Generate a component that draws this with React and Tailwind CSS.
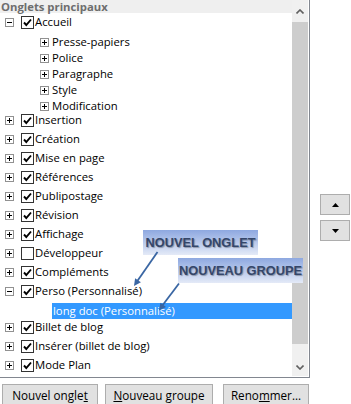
import React from 'react';

// Tree expander box (plus / minus)
function Expander({ open }) {
  return (
    <span className="flex h-[9px] w-[9px] shrink-0 items-center justify-center border border-[#919191] bg-white">
      <svg width="7" height="7" viewBox="0 0 7 7">
        <path d="M1 3.5H6" stroke="#000" strokeWidth="1" />
        {!open && <path d="M3.5 1V6" stroke="#000" strokeWidth="1" />}
      </svg>
    </span>
  );
}

function Check({ checked }) {
  return (
    <span className="flex h-[13px] w-[13px] shrink-0 items-center justify-center border border-[#333333] bg-white">
      {checked && (
        <svg width="11" height="11" viewBox="0 0 11 11">
          <path d="M2 5.5L4.3 8L9 2.5" fill="none" stroke="#000" strokeWidth="1.9" />
        </svg>
      )}
    </span>
  );
}

function TabRow({ label, checked = true, open = false }) {
  return (
    <div className="flex h-[19px] shrink-0 items-center">
      <span className="ml-[5px]"><Expander open={open} /></span>
      <span className="ml-[7px]"><Check checked={checked} /></span>
      <span className="ml-[1px] whitespace-nowrap">{label}</span>
    </div>
  );
}

function GroupRow({ label }) {
  return (
    <div className="flex h-4 shrink-0 items-center">
      <span className="ml-[40px]"><Expander /></span>
      <span className="ml-[3px] whitespace-nowrap">{label}</span>
    </div>
  );
}

function Chevron({ down }) {
  return (
    <svg width="8" height="5" viewBox="0 0 8 5">
      <path
        d={down ? 'M0.5 0.5L4 4L7.5 0.5' : 'M0.5 4.5L4 1L7.5 4.5'}
        fill="none"
        stroke="#606060"
        strokeWidth="1.6"
      />
    </svg>
  );
}

function Button({ className, children }) {
  return (
    <div className={`flex h-[23px] shrink-0 items-center justify-center border border-[#adadad] bg-[#e1e1e1] text-[11.7px] ${className}`}>
      {children}
    </div>
  );
}

export default function App() {
  return (
    <div className="relative h-[404px] w-[351px] overflow-hidden bg-white font-['Open_Sans',sans-serif] text-[11.3px] text-black">
      <div className="flex">
        {/* List box */}
        <div className="flex h-[378px] w-[310px] border-b border-r border-[#828790] pb-[1px] pr-[1px]">
          <div className="flex w-[292px] flex-col overflow-hidden">
            <div className="flex h-[13px] shrink-0 items-center bg-[#efefef] pl-[1px] text-[11.3px] font-bold leading-none text-[#6d6d6d]">
              Onglets principaux
            </div>
            <TabRow label="Accueil" open />
            <div className="mb-[-3px] mt-[2px] flex flex-col">
              <GroupRow label="Presse-papiers" />
              <GroupRow label="Police" />
              <GroupRow label="Paragraphe" />
              <GroupRow label="Style" />
              <GroupRow label="Modification" />
            </div>
            <TabRow label="Insertion" />
            <TabRow label="Création" />
            <TabRow label="Mise en page" />
            <TabRow label="Références" />
            <TabRow label="Publipostage" />
            <TabRow label="Révision" />
            <TabRow label="Affichage" />
            <TabRow label="Développeur" checked={false} />
            <TabRow label="Compléments" />
            <TabRow label="Perso (Personnalisé)" open />
            <div className="mb-[-1px] ml-[52px] mt-[2px] flex h-4 shrink-0 items-center bg-[#3399ff] pl-[1px] text-white">
              long doc (Personnalisé)
            </div>
            <TabRow label="Billet de blog" />
            <TabRow label="Insérer (billet de blog)" />
            <TabRow label="Mode Plan" />
          </div>

          {/* Scrollbar */}
          <div className="flex w-4 flex-col bg-[#f0f0f0]">
            <div className="flex h-[22px] items-center justify-center"><Chevron /></div>
            <div className="h-[322px] bg-[#cdcdcd]" />
            <div className="flex-1" />
            <div className="flex h-[17px] items-center justify-center"><Chevron down /></div>
          </div>
        </div>

        {/* Move up / down */}
        <div className="flex flex-col gap-[5px] pl-[10px] pt-[194px]">
          <div className="flex h-[21px] w-[30px] items-center justify-center border border-[#adadad] bg-[#e1e1e1]">
            <svg width="7" height="4" viewBox="0 0 7 4"><path d="M0 4L3.5 0L7 4Z" fill="#000" /></svg>
          </div>
          <div className="flex h-[21px] w-[30px] items-center justify-center border border-[#adadad] bg-[#e1e1e1]">
            <svg width="7" height="4" viewBox="0 0 7 4"><path d="M0 0L3.5 4L7 0Z" fill="#000" /></svg>
          </div>
        </div>
      </div>

      {/* Bottom buttons */}
      <div className="mt-[6px] flex pl-[2px]">
        <Button className="w-[96px]">Nouvel ongle<span className="underline">t</span></Button>
        <Button className="ml-[7px] w-[108px]"><span className="underline">N</span>ouveau groupe</Button>
        <Button className="ml-[10px] w-[86px]">Reno<span className="underline">m</span>mer...</Button>
      </div>

      {/* Callouts */}
      <div className="absolute left-[143px] top-[230px] flex h-[25px] w-[115px] items-center justify-center bg-gradient-to-b from-[#8ea8e0] to-[#e4eaf7] font-['Liberation_Sans',Arial,sans-serif] text-[12.8px] font-bold text-[#34466a] [text-shadow:1px_1px_1px_rgba(0,0,0,0.3)]">
        NOUVEL ONGLET
      </div>
      <div className="absolute left-[178px] top-[258px] flex h-[25px] w-[125px] items-center justify-center bg-gradient-to-b from-[#8ea8e0] to-[#e4eaf7] font-['Liberation_Sans',Arial,sans-serif] text-[12.8px] font-bold text-[#34466a] [text-shadow:1px_1px_1px_rgba(0,0,0,0.3)]">
        NOUVEAU GROUPE
      </div>
      <svg className="pointer-events-none absolute left-0 top-0" width="351" height="404">
        <line x1="157.5" y1="252" x2="137" y2="281.5" stroke="#3a66a3" strokeWidth="1.8" />
        <polygon points="134,286 140.9,282.2 135.1,278.2" fill="#3a66a3" />
        <line x1="179" y1="283.5" x2="162" y2="306" stroke="#3a66a3" strokeWidth="1.8" />
        <polygon points="159,310.5 166,307 160.4,302.8" fill="#3a66a3" />
      </svg>
    </div>
  );
}
